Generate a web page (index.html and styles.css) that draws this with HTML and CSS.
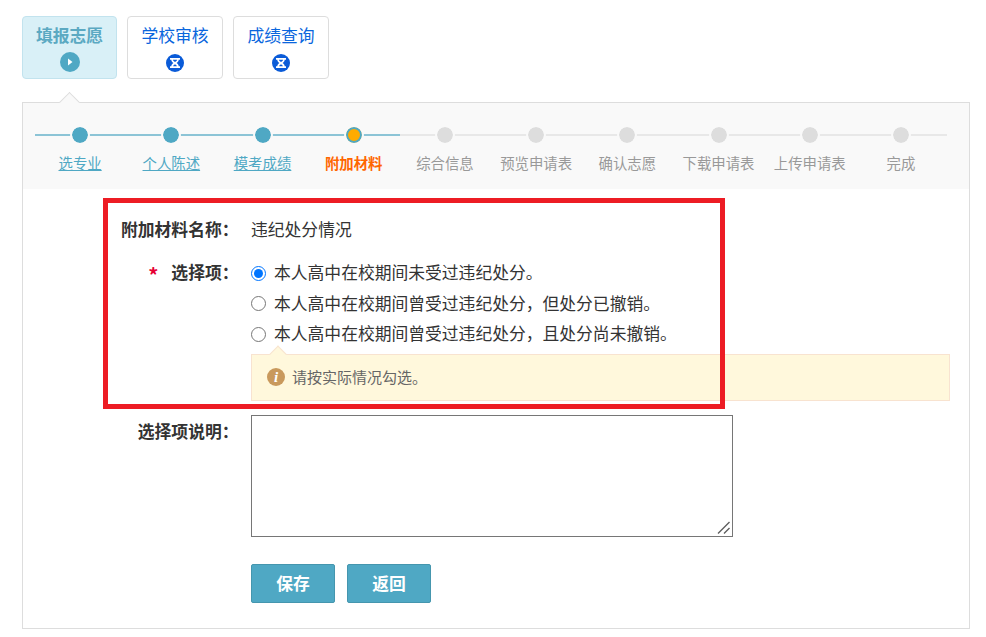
FILE: index.html
```html
<!DOCTYPE html>
<html lang="zh-CN">
<head>
<meta charset="utf-8">
<title>附加材料</title>
<link rel="stylesheet" href="styles.css">
</head>
<body>
<nav class="tabs">
  <div class="tab tab-active">
    <span class="tab-title">填报志愿</span>
    <svg class="tab-icon-play" viewBox="0 0 20 20"><circle cx="10" cy="10" r="10" fill="#4fa8c4"/><path d="M8 6.5 12.5 10 8 13.5z" fill="#fff"/></svg>
  </div>
  <div class="tab">
    <span class="tab-title">学校审核</span>
    <svg class="tab-icon" viewBox="0 0 18 18"><circle cx="9" cy="9" r="9" fill="#0a5bd8"/><path d="M4 4h10v1.800h-1.300c0 1.900-1.300 2.400-2.100 3.200.8.800 2.100 1.300 2.100 3.200H14V14H4v-1.800h1.300c0-1.900 1.300-2.400 2.100-3.200-.8-.8-2.100-1.300-2.100-3.200H4z" fill="#fff"/><path d="M7 5.800h4c0 1-1 1.500-2 2.200-1-.7-2-1.200-2-2.200zM7.200 12.200c.2-.9 1-1.300 1.800-1.900.8.600 1.600 1 1.800 1.900z" fill="#0a5bd8"/></svg>
  </div>
  <div class="tab">
    <span class="tab-title">成绩查询</span>
    <svg class="tab-icon" viewBox="0 0 18 18"><circle cx="9" cy="9" r="9" fill="#0a5bd8"/><path d="M4 4h10v1.800h-1.300c0 1.900-1.300 2.400-2.100 3.200.8.800 2.100 1.300 2.100 3.200H14V14H4v-1.800h1.300c0-1.900 1.300-2.400 2.100-3.200-.8-.8-2.100-1.300-2.100-3.200H4z" fill="#fff"/><path d="M7 5.800h4c0 1-1 1.500-2 2.200-1-.7-2-1.200-2-2.200zM7.200 12.200c.2-.9 1-1.300 1.800-1.900.8.600 1.600 1 1.800 1.900z" fill="#0a5bd8"/></svg>
  </div>
</nav>

<main class="panel">
  <ol class="steps">
    <li class="step step-done"><span class="step-track"><i class="step-dot"></i></span><a class="step-label">选专业</a></li>
    <li class="step step-done"><span class="step-track"><i class="step-dot"></i></span><a class="step-label">个人陈述</a></li>
    <li class="step step-done"><span class="step-track"><i class="step-dot"></i></span><a class="step-label">模考成绩</a></li>
    <li class="step step-current"><span class="step-track"><i class="step-dot"></i></span><a class="step-label">附加材料</a></li>
    <li class="step"><span class="step-track"><i class="step-dot"></i></span><a class="step-label">综合信息</a></li>
    <li class="step"><span class="step-track"><i class="step-dot"></i></span><a class="step-label">预览申请表</a></li>
    <li class="step"><span class="step-track"><i class="step-dot"></i></span><a class="step-label">确认志愿</a></li>
    <li class="step"><span class="step-track"><i class="step-dot"></i></span><a class="step-label">下载申请表</a></li>
    <li class="step"><span class="step-track"><i class="step-dot"></i></span><a class="step-label">上传申请表</a></li>
    <li class="step"><span class="step-track"><i class="step-dot"></i></span><a class="step-label">完成</a></li>
  </ol>

  <form class="form">
    <div class="row row-name">
      <div class="label">附加材料名称：</div>
      <div class="value">违纪处分情况</div>
    </div>
    <div class="row row-options">
      <div class="label"><span class="required">*</span>选择项：</div>
      <div class="value options">
        <label class="option"><input type="radio" name="opt" checked>本人高中在校期间未受过违纪处分。</label>
        <label class="option"><input type="radio" name="opt">本人高中在校期间曾受过违纪处分，但处分已撤销。</label>
        <label class="option"><input type="radio" name="opt">本人高中在校期间曾受过违纪处分，且处分尚未撤销。</label>
        <div class="tip"><span class="tip-icon">i</span>请按实际情况勾选。</div>
      </div>
    </div>
    <div class="row row-desc">
      <div class="label">选择项说明：</div>
      <div class="value textarea-wrap">
        <textarea class="textarea"></textarea>
        <svg class="grip" viewBox="0 0 13 13"><path d="M1 12.500 12.500 1M7 12.500 12.500 7" fill="none" stroke="#5f5f5f" stroke-width="1.400"/></svg>
      </div>
    </div>
    <div class="row row-actions">
      <button type="button" class="btn">保存</button>
      <button type="button" class="btn">返回</button>
    </div>
  </form>

  <div class="highlight"></div>
</main>
</body>
</html>
```
FILE: styles.css
```css
* { box-sizing: border-box; }
html, body { height: 100%; }
body {
  margin: 0;
  padding: 16px 16px 0 22px;
  background: #fff;
  font-family: "Noto Sans CJK SC", "Noto Sans", sans-serif;
  color: #333;
  overflow: hidden;
}
.tabs { display: flex; gap: 10px; }
.tab {
  width: 96px;
  height: 63px;
  border: 1px solid #ddd;
  border-radius: 4px;
  background: #fff;
  display: flex;
  flex-direction: column;
  align-items: center;
  padding-top: 6px;
}
.tab-active { width: 95px; background: #d9f0f7; border-color: #c2e3ee; }
.tab-title { font-size: 16.8px; line-height: 24px; color: #0a66dd; }
.tab-active .tab-title { color: #5ba9c2; font-weight: 700; }
.tab-icon { width: 18px; height: 18px; margin-top: 7px; }
.tab-icon-play { width: 20px; height: 20px; margin-top: 5px; }

.panel {
  position: relative;
  width: 948px;
  height: 527px;
  margin-top: 23px;
  border: 1px solid #ddd;
  background: #fff;
}
.panel::before {
  content: "";
  position: absolute;
  left: 39px;
  top: -8px;
  width: 14px;
  height: 14px;
  background: #f9f9f9;
  border: 1px solid #ddd;
  border-right: 0;
  border-bottom: 0;
  transform: rotate(45deg);
}

.steps {
  position: relative;
  display: flex;
  list-style: none;
  margin: 0;
  padding: 0 22px 0 12px;
  height: 86px;
  background: #f9f9f9;
}
.step {
  flex: 1 1 0;
  display: flex;
  flex-direction: column;
  align-items: center;
  padding-top: 23px;
}
.step-track {
  position: relative;
  width: 100%;
  height: 18px;
  display: flex;
  align-items: center;
  justify-content: center;
}
.step-track::before {
  content: "";
  position: absolute;
  left: 0;
  right: 0;
  top: 8px;
  height: 2px;
  background: #e8e8e8;
}
.step-dot {
  position: relative;
  width: 20px;
  height: 20px;
  margin-left: -1px;
  border-radius: 50%;
  background: #ddd;
  border: 2px solid #f9f9f9;
  background-clip: padding-box;
}
.step-label {
  margin: 9px 1px 0 0;
  font-size: 14.4px;
  line-height: 20px;
  white-space: nowrap;
  color: #999;
}
.step-done .step-track::before, .step-current .step-track::before { background: #8cc4d6; }
.step-done .step-dot { background-color: #4fa8c4; }
.step-done .step-label { color: #4fa8c4; text-decoration: underline; }
.step-current .step-dot {
  background-color: #ffab00;
  box-shadow: inset 0 0 0 2px #4fa8c4;
}
.step-current .step-label { color: #ff6600; font-weight: 700; }

.form { display: flex; flex-direction: column; }
.row { display: flex; font-size: 16.8px; line-height: 24px; }
.label {
  width: 215.5px;
  margin-right: 12.5px;
  flex: none;
  text-align: right;
  font-weight: 700;
  color: #333;
  white-space: nowrap;
}
.required {
  position: relative;
  top: 4px;
  color: #e60033;
  margin-right: 13px;
  font-size: 20px;
  line-height: 1;
  font-weight: 700;
}
.row-name { margin-top: 28px; }
.row-options { margin-top: 16px; }
.row-options .label { padding-top: 3px; }
.options { display: flex; flex-direction: column; }
.option { display: flex; align-items: center; height: 30.5px; white-space: nowrap; }
.option input {
  width: 15px;
  height: 15px;
  margin: 2px 8px 0 0;
  flex: none;
}
.tip {
  position: relative;
  width: 699px;
  height: 47px;
  margin-top: 5px;
  padding-left: 15px;
  display: flex;
  align-items: center;
  font-size: 15px;
  color: #666;
  background: #fff8dc;
  border: 1px solid #f8e3d0;
}
.tip::before {
  content: "";
  position: absolute;
  left: 20px;
  top: -7px;
  width: 11px;
  height: 11px;
  background: #fff8dc;
  border: 1px solid #f8e3d0;
  border-right: 0;
  border-bottom: 0;
  transform: rotate(45deg);
}
.tip-icon {
  width: 18px;
  height: 18px;
  margin-right: 7px;
  border-radius: 50%;
  background: #c9995c;
  color: #fff;
  font: italic 700 15px/18px "Liberation Serif", serif;
  text-align: center;
}
.row-desc { margin-top: 14px; }
.row-desc .label { padding-top: 4px; }
.textarea-wrap { position: relative; }
.textarea {
  display: block;
  width: 482px;
  height: 122px;
  background: #fff;
  resize: none;
}
.grip {
  position: absolute;
  right: 3px;
  bottom: 3px;
  width: 13px;
  height: 13px;
}
.row-actions { margin-top: 27px; padding-left: 228px; gap: 12px; }
.btn {
  width: 84px;
  height: 39px;
  padding: 0;
  border: 1px solid #4596ae;
  border-radius: 2px;
  background: #4fa8c4;
  color: #fff;
  font: 700 16.8px/1 "Noto Sans CJK SC", sans-serif;
}
.highlight {
  position: absolute;
  left: 80px;
  top: 95px;
  width: 622px;
  height: 211px;
  border: 5px solid #ed1c24;
  pointer-events: none;
}
```
